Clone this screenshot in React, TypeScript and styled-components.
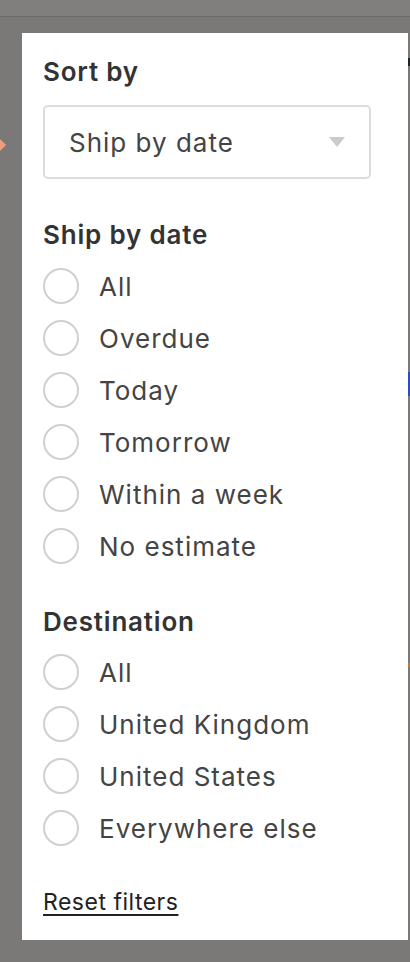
import styled, { createGlobalStyle } from "styled-components";

const GlobalStyle = createGlobalStyle`
  html, body {
    margin: 0;
    padding: 0;
    background: #7a7977;
  }
  * { box-sizing: border-box; }
`

const Backdrop = styled.div`
  position: relative;
  width: 410px;
  height: 962px;
  background: #7a7977;
  overflow: hidden;
  font-family: "Inter", "Liberation Sans", sans-serif;
`
const TopStrip = styled.div`
  height: 17px;
  background: #807f7d;
  border-bottom: 1px solid #6c6b69;
`
const EdgeMark = styled.div<{ $top: number; $color: string; $h: number }>`
  position: absolute;
  right: 0;
  top: ${p => p.$top}px;
  width: 2px;
  height: ${p => p.$h}px;
  background: ${p => p.$color};
`
const Diamond = styled.div`
  position: absolute;
  left: -6px;
  top: 140px;
  width: 10px;
  height: 10px;
  background: #f29a7c;
  transform: rotate(45deg);
`
const Body = styled.div`
  display: flex;
  padding: 16px 2px 0 22px;
`
const Panel = styled.div`
  width: 386px;
  height: 907px;
  background: #ffffff;
  padding: 23px 37px 0 21px;
  display: flex;
  flex-direction: column;
`
const Heading = styled.h2<{ $gap: number }>`
  margin: 0 0 ${p => p.$gap}px 0;
  font-size: 26px;
  line-height: 32px;
  font-weight: 600;
  letter-spacing: 0.8px;
  color: #333333;
`
const Select = styled.div`
  height: 74px;
  border: 2px solid #dcdcdc;
  border-radius: 5px;
  display: flex;
  align-items: center;
  justify-content: space-between;
  padding: 0 24px 0 24px;
  font-size: 26px;
  letter-spacing: 1px;
  color: #444444;
  margin-bottom: 40px;
`
const Caret = styled.span`
  width: 0;
  height: 0;
  border-left: 8px solid transparent;
  border-right: 8px solid transparent;
  border-top: 10px solid #cbcbcb;
`
const RadioList = styled.div<{ $gap: number }>`
  display: flex;
  flex-direction: column;
  margin-bottom: ${p => p.$gap}px;
`
const RadioRow = styled.label`
  height: 52px;
  display: flex;
  align-items: center;
  gap: 20px;
  font-size: 26px;
  letter-spacing: 1px;
  color: #444444;
  cursor: pointer;
`
const Circle = styled.span`
  width: 36px;
  height: 36px;
  border-radius: 50%;
  border: 2px solid #d0d0d0;
  background: #ffffff;
  flex-shrink: 0;
`
const ResetLink = styled.a`
  font-size: 23px;
  line-height: 28px;
  letter-spacing: 0.5px;
  color: #222222;
  text-decoration: underline;
  text-underline-offset: 4px;
  text-decoration-thickness: 2px;
  cursor: pointer;
  align-self: flex-start;
`

const shipOptions = ["All", "Overdue", "Today", "Tomorrow", "Within a week", "No estimate"];
const destinationOptions = ["All", "United Kingdom", "United States", "Everywhere else"];

function RadioGroup({ options, gap }: { options: string[]; gap: number }) {
  return (
    <RadioList $gap={gap}>
      {options.map(o => (
        <RadioRow key={o}>
          <Circle />
          {o}
        </RadioRow>
      ))}
    </RadioList>
  )
}

export default function App() {
  return (
    <>
      <GlobalStyle />
      <Backdrop>
        <TopStrip />
        <EdgeMark $top={58} $color="#1f2328" $h={8} />
        <EdgeMark $top={372} $color="#2a4fb8" $h={24} />
        <EdgeMark $top={663} $color="#c07a2a" $h={4} />
        <Diamond />
        <Body>
          <Panel>
            <Heading $gap={17}>Sort by</Heading>
            <Select>
              Ship by date
              <Caret />
            </Select>
            <Heading $gap={9}>Ship by date</Heading>
            <RadioGroup options={shipOptions} gap={34} />
            <Heading $gap={8}>Destination</Heading>
            <RadioGroup options={destinationOptions} gap={34} />
            <ResetLink>Reset filters</ResetLink>
          </Panel>
        </Body>
      </Backdrop>
    </>
  )
}
